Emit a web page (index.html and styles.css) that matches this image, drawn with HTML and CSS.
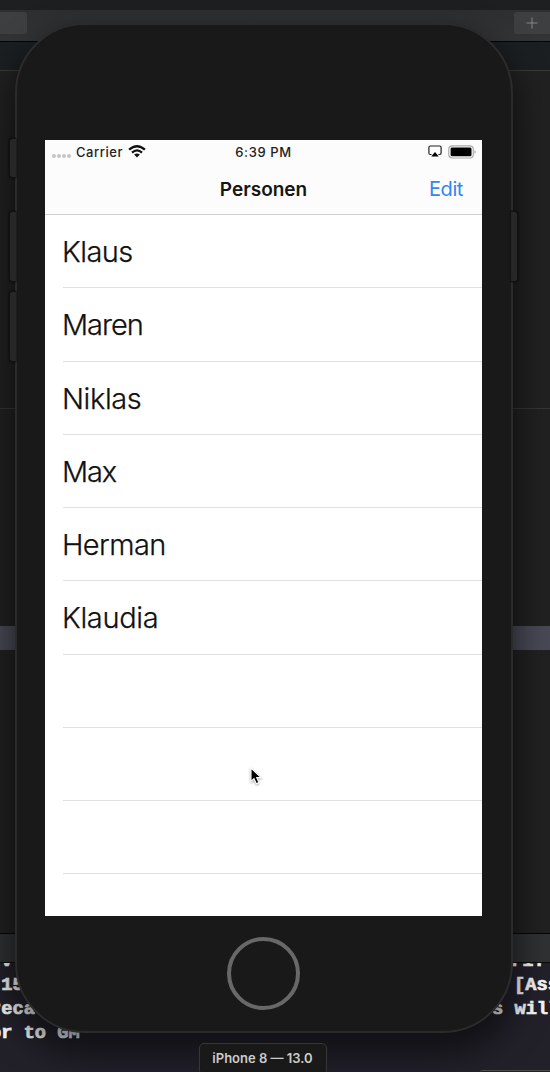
FILE: index.html
```
<!DOCTYPE html>
<html lang="de">
<head>
<meta charset="utf-8">
<title>iPhone 8 — 13.0</title>
<link rel="stylesheet" href="styles.css">
</head>
<body>
<div class="desktop">
  <div class="editor">
    <div class="menubar"></div>
    <div class="toolbar">
      <span class="tool tool-left"></span>
      <span class="tool tool-add"><svg width="12" height="12" viewBox="0 0 12 12"><path d="M6 .5v11M.5 6h11" stroke="#858687" stroke-width="1"/></svg></span>
    </div>
    <div class="tabs"></div>
    <div class="code code-top"></div>
    <div class="code code-mid"></div>
    <div class="highlight"></div>
    <div class="code code-low"></div>
    <div class="debugbar"></div>
    <div class="console">
      <div class="log"><span class="cut-v">.v.</span><span class="cut-r">r1.</span></div>
      <div class="log"><span>-15</span><span class="right-a">[Ass</span></div>
      <div class="log"><span>reca</span><span class="right-b">s will</span></div>
      <div class="log"><span>or to GM</span></div>
    </div>
  </div>

  <div class="device">
    <i class="key mute"></i><i class="key vol-up"></i><i class="key vol-down"></i><i class="key power"></i>
    <div class="shell">
      <div class="screen">
        <header class="nav">
          <div class="status">
            <div class="signal"><i class="dot"></i><i class="dot"></i><i class="dot"></i><i class="dot"></i>
              <span class="carrier">Carrier</span>
              <svg width="18" height="13" viewBox="0 0 18 13" fill="none" stroke="#111"><path d="M1.1 4.7Q9-2.3 16.9 4.7M4 7.6Q9 3.2 14 7.6" stroke-width="2.3"/><path d="M6.1 9.6Q9 7.2 11.9 9.6L9 12.6Z" fill="#111" stroke="none"/></svg>
            </div>
            <span class="time">6:39 PM</span>
            <div class="power-info">
              <svg width="14" height="13" viewBox="0 0 14 13"><path d="M3.6 9.5H2.3Q.9 9.5.9 8.1V2.5Q.9 1 2.3 1h9.4q1.4 0 1.4 1.5v5.6q0 1.4-1.4 1.4h-1.3" fill="none" stroke="#222" stroke-width="1.2"/><path d="M7 7l3.8 4.6H3.2Z" fill="#000"/></svg>
              <svg width="28" height="14" viewBox="0 0 28 14"><rect x=".8" y=".8" width="24.5" height="12.2" rx="3.4" fill="#fff" stroke="#aaa" stroke-width="1.2"/><rect x="2.6" y="2.6" width="20.9" height="8.7" rx="1.4"/><path d="M26.6 5v4q1.2-.5 1.2-2t-1.2-2Z" fill="#aaa"/></svg>
            </div>
          </div>
          <div class="titlebar"><span class="title">Personen</span><span class="edit">Edit</span></div>
        </header>
        <ul class="list">
          <li><span class="n1">Klaus</span></li>
          <li><span class="n2">Maren</span></li>
          <li><span class="n3">Niklas</span></li>
          <li><span class="n4">Max</span></li>
          <li><span class="n5">Herman</span></li>
          <li><span class="n6">Klaudia</span></li>
          <li></li><li></li><li></li><li></li>
        </ul>
      </div>
      <div class="home"></div>
    </div>
    <div class="label">iPhone 8 — 13.0</div>
  </div>
  <svg class="cursor" width="14" height="21" viewBox="0 0 14 21"><path d="M2 2v13.5l3-2.8 2.3 5 2.6-1.1-2.2-5h4.4Z" fill="#000" stroke="#fff" stroke-width="1.1"/></svg>
  <i class="corner"></i>
</div>
</body>
</html>
```
FILE: styles.css
```
* { box-sizing: border-box; }
body { margin: 0; background: #1e1e1e; font-family: Inter, "Liberation Sans", sans-serif; }
.desktop { position: relative; width: 550px; height: 1072px; overflow: hidden; }
.editor { display: flex; flex-direction: column; height: 1072px; }
.menubar { height: 10px; background: #1d1f21; }
.toolbar { height: 32px; display: flex; justify-content: space-between; padding-top: 2px; background: linear-gradient(#2d2f31, #333436); border-bottom: 1px solid #050505; }
.tool { height: 22px; background: #3e3f41; display: flex; align-items: center; justify-content: center; }
.tool-left { width: 27px; border-radius: 0 3px 3px 0; }
.tool-add { width: 36px; border-radius: 3px 0 0 3px; }
.tabs { height: 29px; background: #1b1f22; border-bottom: 1px solid #3a3a39; }
.code { background: #212121; }
.code-top { height: 338px; border-bottom: 1px solid #353535; }
.code-mid { height: 217px; }
.highlight { height: 24px; background: #494956; }
.code-low { height: 284px; border-bottom: 1px solid #050505; }
.debugbar { height: 29px; background: #303133; border-bottom: 1px solid #0c0c0c; }
.console { height: 109px; overflow: hidden; background: #22212a; color: #f6f6f6; font: bold 18.7px/24px "Liberation Mono", monospace; -webkit-text-stroke: .7px #f6f6f6; }
.log { height: 24px; display: flex; justify-content: space-between; white-space: pre; margin-left: -10px; }
.log:first-child { height: 10px; align-items: flex-end; }
.cut-r { width: 39px; }
.right-a { width: 36px; }
.right-b { width: 58px; }

.device { position: absolute; left: 14px; top: 23px; width: 499px; display: flex; flex-direction: column; align-items: center; }
.key { position: absolute; z-index: 1; width: 7px; background: #272727; border: 1px solid #111; box-shadow: 0 0 2px #000; }
.mute, .vol-up, .vol-down { left: -5px; border-right: 0; border-radius: 3px 0 0 3px; }
.mute { top: 115px; height: 40px; }
.vol-up { top: 188px; height: 71px; }
.vol-down { top: 268px; height: 71px; }
.power { right: -5px; top: 188px; height: 71px; border-left: 0; border-radius: 0 3px 3px 0; }
.shell { position: relative; width: 498px; height: 1010px; padding: 115px 29px 0; border: 2px solid #2b2b2b; border-radius: 70px; background: #191919; box-shadow: 0 16px 32px 6px rgba(0,0,0,.5); display: flex; flex-direction: column; align-items: center; }
.screen { width: 437px; height: 776px; background: #fff; overflow: hidden; flex: none; }
.nav { height: 75px; background: #fcfcfc; border-bottom: 1px solid #cfcfcf; }
.status { height: 24px; padding-bottom: 1px; display: grid; grid-template-columns: 1fr auto 1fr; align-items: center; font-size: 13px; color: #222; font-weight: 450; }
.signal { display: flex; align-items: center; padding-left: 7px; }
.dot { width: 4px; height: 4px; margin: 9px 1px 0 0; border-radius: 50%; background: #c4c4c4; }
.carrier { margin: 0 5px 0 4px; letter-spacing: .55px; }
.time { letter-spacing: .6px; }
.power-info { display: flex; justify-content: flex-end; align-items: center; gap: 6px; padding-right: 6px; }
.titlebar { height: 50px; display: grid; grid-template-columns: 1fr auto 1fr; align-items: center; }
.title { grid-column: 2; font-size: 19px; font-weight: 600; color: #161616; }
.edit { justify-self: end; margin-right: 19px; font-size: 20px; letter-spacing: -.4px; color: #3486f0; }
.list { list-style: none; margin: 0; padding: 0 0 0 18px; }
.list li { height: 73.25px; display: flex; align-items: center; padding-top: 1px; border-bottom: 1px solid #e0e0e0; font-size: 29px; font-weight: 300; color: #111; -webkit-text-stroke: .25px #111; }
.list span { margin-left: -1px; }
.n1 { letter-spacing: -.55px; }
.n2 { letter-spacing: -1px; }
.n3 { letter-spacing: -.4px; }
.n4 { letter-spacing: -1.1px; }
.n5 { letter-spacing: -.6px; }
.n6 { letter-spacing: -.35px; }
.home { width: 73px; height: 73px; margin-top: 21px; border: 4px solid #686868; border-radius: 50%; }
.label { position: relative; left: -1px; width: 128px; height: 32px; margin-top: 10px; border: 1px solid #363636; border-radius: 5px; background: #191919; color: #ccc; font-size: 13px; font-weight: 600; line-height: 29px; text-align: center; }
.cursor { position: absolute; left: 249px; top: 766px; filter: drop-shadow(0 1px 1px rgba(0,0,0,.35)); }
.corner { position: absolute; left: 480px; top: 1070px; width: 70px; height: 2px; border-top: 1px solid #4a4a4c; border-radius: 3px 0 0; }
```
